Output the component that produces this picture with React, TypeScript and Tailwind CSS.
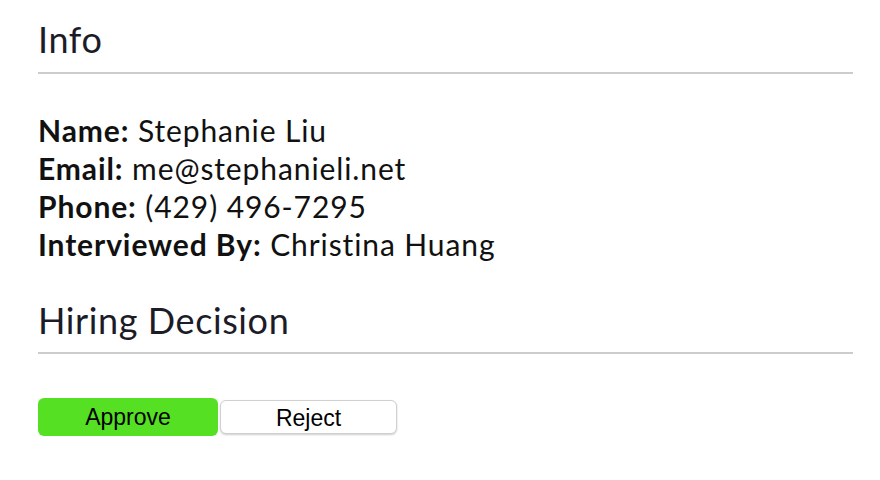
export default function App() {
  const info = [
    { label: "Name:", value: "Stephanie Liu" },
    { label: "Email:", value: "me@stephanieli.net" },
    { label: "Phone:", value: "(429) 496-7295" },
    { label: "Interviewed By:", value: "Christina Huang" },
  ];

  return (
    <div className="min-h-[480px] w-[880px] bg-white pl-[38px] font-['Lato',sans-serif]">
      <div className="w-[815px]">
        <h2 className="border-b-2 border-[#cccccc] pt-[17px] pb-[11px] text-[36px] leading-[44px] tracking-[0.6px] text-[#1c1c28]">
          Info
        </h2>
        <div className="mt-[37px] text-[30px] leading-[38px] tracking-[0.9px] text-[#111111]">
          {info.map((row) => (
            <div key={row.label}>
              <span className="font-bold">{row.label}</span> {row.value}
            </div>
          ))}
        </div>
        <h2 className="mt-[35px] border-b-2 border-[#cccccc] pb-[10px] text-[36px] leading-[44px] tracking-[0.6px] text-[#1c1c28]">
          Hiring Decision
        </h2>
        <div className="mt-[44px] flex items-center gap-[2px] font-['Liberation_Sans',Arial,sans-serif] text-[23px] text-black">
          <button className="h-[38px] w-[180px] rounded-[6px] bg-[#55e023]">
            Approve
          </button>
          <button className="h-[34px] w-[177px] rounded-[6px] border border-[#d0d0d0] bg-white shadow-[0_1px_2px_rgba(0,0,0,0.2)]">
            Reject
          </button>
        </div>
      </div>
    </div>
  );
}
